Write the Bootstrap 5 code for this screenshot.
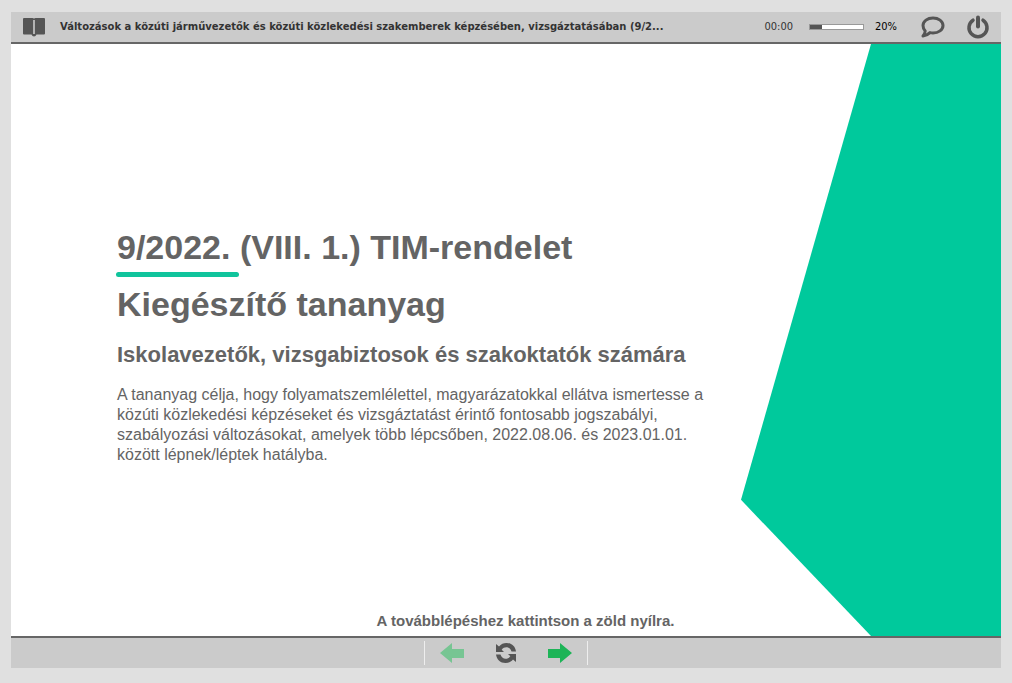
<!DOCTYPE html>
<html lang="hu">
<head>
<meta charset="utf-8">
<meta name="viewport" content="width=device-width, initial-scale=1">
<title>9/2022. (VIII. 1.) TIM-rendelet</title>
<link href="https://cdn.jsdelivr.net/npm/bootstrap@5.3.0/dist/css/bootstrap.min.css" rel="stylesheet">
<style>
  body { background: #e0e0e0; font-family: "Liberation Sans", Arial, sans-serif; color: #646464; }
  .player { padding: 12px 11px 15px; }
  .bar { background: #cbcbcb; height: 32px; }
  .bar-top { border-bottom: 2px solid #666; padding: 0 11px 0 12px; }
  .bar-bottom { border-top: 2px solid #666; }
  .course-title { font: bold 10px/16px "DejaVu Sans", Verdana, sans-serif; color: #333; margin-left: 15px; }
  .status { font: 11px/16px "DejaVu Sans Condensed", "DejaVu Sans", Tahoma, sans-serif; font-stretch: condensed; color: #333; }
  .status-percent { color: #000; margin: 0 24px 0 11px; }
  .meter { width: 55px; height: 6px; border: 1px solid #999; border-radius: 0; background: #fff; margin-left: 16px; }
  .meter .progress-bar { background: #555; }
  .tool { border: 0; background: none; padding: 0; line-height: 0; color: #555; }
  .tool-note { margin-right: 21px; }
  .slide { background: #fff; }
  .slide-shape { right: 0; width: 260px; background: #00c99c; clip-path: polygon(50% 0, 100% 0, 100% 100%, 50% 100%, 0 77%); }
  .slide-text { padding: 28px 106px 0; }
  .slide-title { font-size: 34px; line-height: 57px; font-weight: bold; }
  .marked::after { content: ""; position: absolute; left: -1px; right: -9px; bottom: -11px; height: 5px; border-radius: 3px; background: #10c49c; }
  .slide-subtitle { font-size: 22px; line-height: 28px; font-weight: bold; }
  .slide-lead { font-size: 16px; line-height: 20px; }
  .slide-hint { font-size: 15px; line-height: 20px; padding-left: 39px; margin-bottom: 5px; }
  .controls { border: solid #eee; border-width: 0 1px; width: 164px; height: 24px; padding: 0 15px; }
</style>
</head>
<body>
<div class="player min-vh-100 d-flex flex-column">
  <header class="bar bar-top d-flex align-items-center">
    <button class="tool" type="button" aria-label="Tartalom">
      <svg width="22" height="20" viewBox="0 0 22 20" fill="currentColor"><path d="M1 1h8.500q1 0 1.500.8.500-.8 1.500-.8H21q1 0 1 1v14.500q0 1-1 1h-7.500q-.8 2-2.500 2t-2.500-2H1q-1 0-1-1V2q0-1 1-1z"/><path d="M10.200 3h1.600v14h-1.600z" fill="#cbcbcb"/></svg>
    </button>
    <div class="course-title text-nowrap">Változások a közúti járművezetők és közúti közlekedési szakemberek képzésében, vizsgáztatásában (9/2...</div>
    <div class="status d-flex align-items-center ms-auto">
      <span>00:00</span>
      <div class="progress meter" role="progressbar" aria-label="Haladás" aria-valuenow="20" aria-valuemin="0" aria-valuemax="100"><div class="progress-bar" style="width: 22%"></div></div>
      <span class="status-percent">20%</span>
    </div>
    <button class="tool tool-note" type="button" aria-label="Megjegyzés">
      <svg width="24" height="22" viewBox="0 0 24 22" fill="none" stroke="currentColor" stroke-width="3" stroke-linejoin="round"><path d="M12 2C17.500 2 22 5.200 22 9.500s-4.500 7.500-10 7.500q-1.500 0-3-.4-2.900 2.900-7 3.400 2-2.300 2.200-5Q2 12.500 2 9.500C2 5.200 6.500 2 12 2z"/></svg>
    </button>
    <button class="tool" type="button" aria-label="Kilépés">
      <svg width="24" height="24" viewBox="0 0 24 24" fill="none" stroke="currentColor" stroke-linecap="round"><path d="M7 5.200a9 9 0 1 0 10 0" stroke-width="3.500"/><path d="M12 2.500v9" stroke-width="4"/></svg>
    </button>
  </header>

  <main class="slide flex-grow-1 position-relative d-flex flex-column">
    <div class="slide-shape position-absolute top-0 bottom-0"></div>
    <div class="slide-text position-relative my-auto">
      <h1 class="slide-title mb-2"><span class="marked position-relative">9/2022.</span> (VIII. 1.) TIM-rendelet<br>Kiegészítő tananyag</h1>
      <h2 class="slide-subtitle mb-3">Iskolavezetők, vizsgabiztosok és szakoktatók számára</h2>
      <p class="slide-lead mb-0">A tananyag célja, hogy folyamatszemlélettel, magyarázatokkal ellátva ismertesse a<br>közúti közlekedési képzéseket és vizsgáztatást érintő fontosabb jogszabályi,<br>szabályozási változásokat, amelyek több lépcsőben, 2022.08.06. és 2023.01.01.<br>között lépnek/léptek hatályba.</p>
    </div>
    <p class="slide-hint fw-bold text-center position-relative">A továbblépéshez kattintson a zöld nyílra.</p>
  </main>

  <footer class="bar bar-bottom d-flex align-items-center justify-content-center">
    <div class="controls d-flex align-items-center justify-content-between">
      <button class="tool" type="button" aria-label="Vissza" disabled>
        <svg width="24" height="20" viewBox="0 0 24 20"><path d="M0 10 12 0v6h12v9H12v5z" fill="#77c593"/></svg>
      </button>
      <button class="tool" type="button" aria-label="Újra">
        <svg width="22" height="22" viewBox="0 0 22 22" fill="currentColor"><path id="half" d="M1 2v8h8L6.700 7.700C8 6 9.500 5.300 11.300 5.300c2.600 0 4.400 1.500 5.200 4.200H21C20.300 4.300 16.500 1 11.500 1 8.500 1 6 2 4 4.500z"/><path d="M21 20v-8h-8l2.300 2.300c-1.300 1.700-2.800 2.400-4.600 2.400-2.600 0-4.400-1.500-5.200-4.200H1C1.700 17.700 5.500 21 10.500 21c3 0 5.500-1 7.500-3.500z"/></svg>
      </button>
      <button class="tool" type="button" aria-label="Tovább">
        <svg width="24" height="20" viewBox="0 0 24 20"><path d="M24 10 12 0v6H0v9h12v5z" fill="#1db457"/></svg>
      </button>
    </div>
  </footer>
</div>
<script src="https://cdn.jsdelivr.net/npm/bootstrap@5.3.0/dist/js/bootstrap.bundle.min.js"></script>
</body>
</html>
